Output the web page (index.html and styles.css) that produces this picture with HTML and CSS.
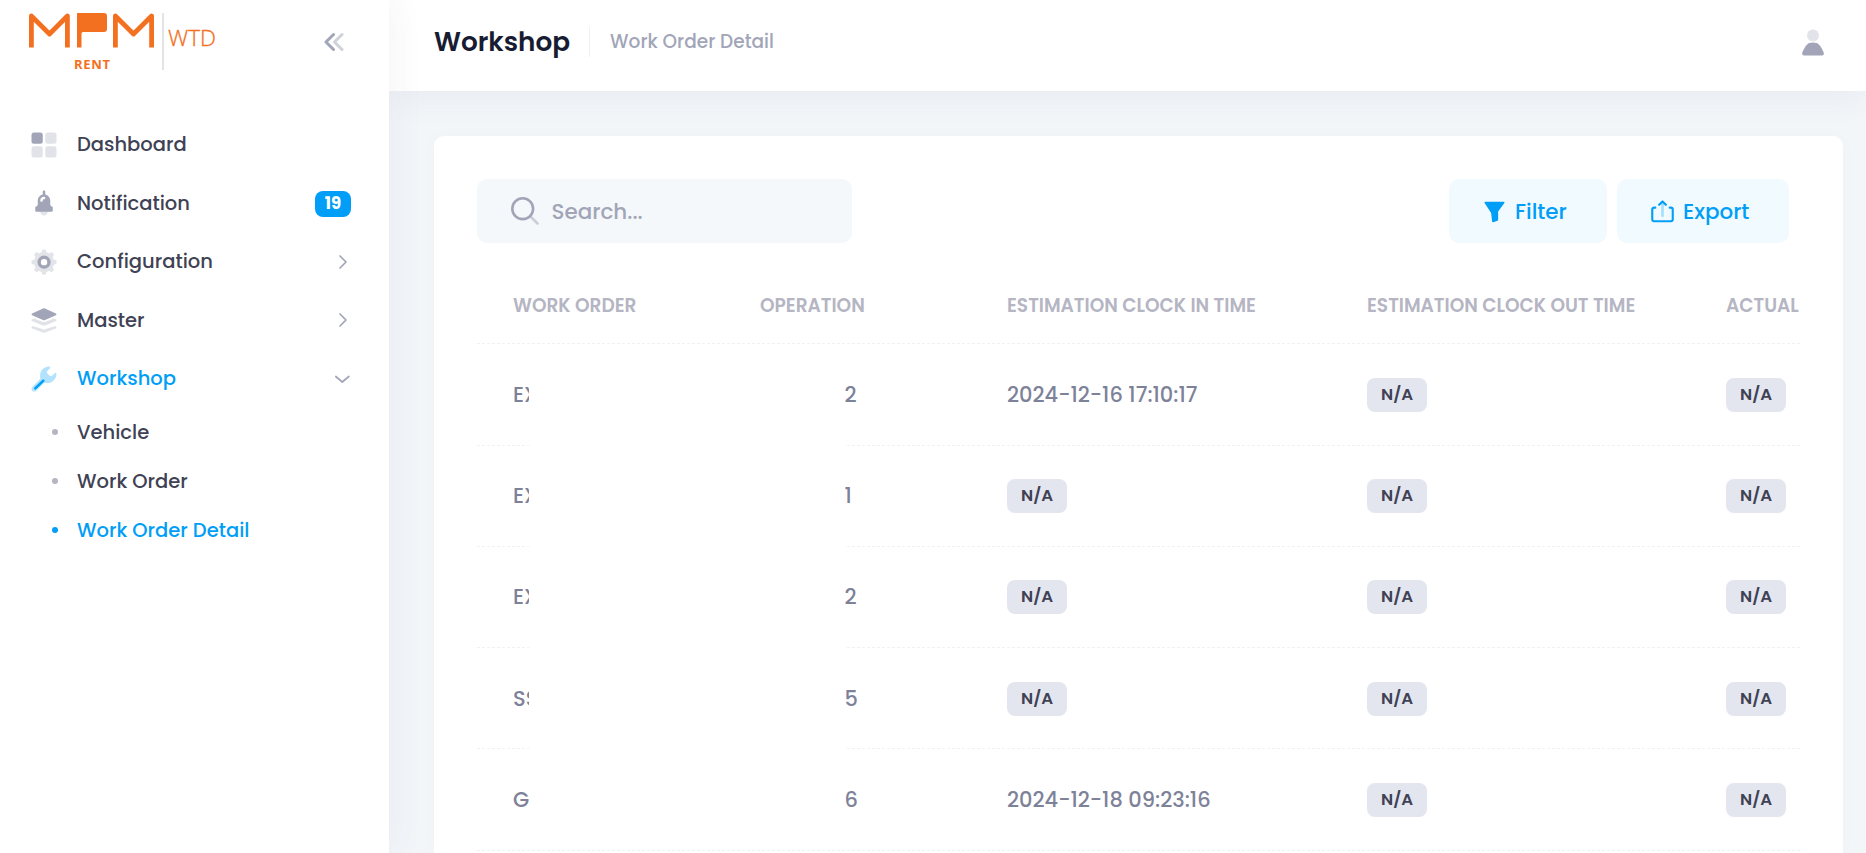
FILE: index.html
```html
<!DOCTYPE html>
<html lang="en">
<head>
<meta charset="utf-8">
<title>Workshop - Work Order Detail</title>
<link rel="stylesheet" href="styles.css">
</head>
<body>
<aside class="sidebar">
  <div class="brand">
    <svg class="logo" width="190" height="60" viewBox="0 0 190 60">
      <g fill="none" stroke="#f37021" stroke-width="4.8" stroke-linejoin="round">
        <path d="M2.400 34.500V3L20.500 21L38.400 3V34.500"/>
        <path d="M86.400 34.500V3L104.500 21L122.600 3V34.500"/>
      </g>
      <path fill="#f37021" d="M48 0h27q3 0 3 3v13q0 3-3 3H54q-1.500 0-1.500 1.500V34.500H48z"/>
      <path fill="#e4e4e6" d="M133 0h2v57h-2z"/>
      <text class="logo-rent" x="45" y="56" textLength="36">RENT</text>
      <text class="logo-wtd" x="139" y="33" textLength="48" lengthAdjust="spacingAndGlyphs">WTD</text>
    </svg>
    <svg class="collapse" width="20" height="20" viewBox="0 0 20 20" fill="none" stroke="#a1a5b7" stroke-width="3" stroke-linecap="round" stroke-linejoin="round"><path d="M9.500 2.500L2 10l7.500 7.500"/><path opacity=".5" d="M18 2.500L10.500 10l7.500 7.500"/></svg>
  </div>
  <nav class="menu">
    <a class="item"><svg class="ico" viewBox="0 0 24 24"><rect x="2" y="2" width="9" height="9" rx="2"/><g opacity=".3"><rect x="13" y="2" width="9" height="9" rx="2"/><rect x="13" y="13" width="9" height="9" rx="2"/><rect x="2" y="13" width="9" height="9" rx="2"/></g></svg><span class="label">Dashboard</span></a>
    <a class="item"><svg class="ico" viewBox="0 0 24 24"><path opacity=".3" d="M12 22C13.657 22 15 20.657 15 19S13.657 16 12 16 9 17.343 9 19s1.343 3 3 3Z"/><path fill-rule="evenodd" d="M19 15V18C19 18.600 18.600 19 18 19H6C5.400 19 5 18.600 5 18V15C6.100 15 7 14.100 7 13V10C7 7.600 8.700 5.600 11 5.100V3C11 2.400 11.400 2 12 2C12.600 2 13 2.400 13 3V5.100C15.300 5.600 17 7.600 17 10V13C17 14.100 17.900 15 19 15ZM11 10C11 9.400 11.400 9 12 9C12.600 9 13 8.600 13 8C13 7.400 12.600 7 12 7C10.300 7 9 8.300 9 10C9 10.600 9.400 11 10 11C10.600 11 11 10.600 11 10Z"/></svg><span class="label">Notification</span><span class="count">19</span></a>
    <a class="item"><svg class="ico" viewBox="0 0 24 24"><path opacity=".3" d="M22.100 11.500V12.600C22.100 13.200 21.700 13.600 21.200 13.700L19.900 13.900C19.700 14.700 19.400 15.500 18.900 16.200L19.700 17.300C20 17.700 20 18.400 19.600 18.800L18.800 19.600C18.400 20 17.800 20 17.300 19.700L16.200 18.900C15.500 19.300 14.700 19.700 13.900 19.900L13.700 21.200C13.600 21.700 13.100 22.100 12.600 22.100H11.500C10.900 22.100 10.500 21.700 10.400 21.200L10.200 19.900C9.400 19.700 8.600 19.400 7.900 18.900L6.800 19.700C6.400 20 5.700 20 5.300 19.600L4.500 18.800C4.100 18.400 4.100 17.800 4.400 17.300L5.200 16.200C4.800 15.500 4.400 14.700 4.200 13.900L2.900 13.700C2.400 13.600 2 13.100 2 12.600V11.500C2 10.900 2.400 10.500 2.900 10.400L4.200 10.200C4.400 9.400 4.700 8.600 5.200 7.900L4.400 6.800C4.100 6.400 4.100 5.700 4.500 5.300L5.300 4.500C5.700 4.100 6.300 4.100 6.800 4.400L7.900 5.200C8.600 4.800 9.400 4.400 10.200 4.200L10.400 2.900C10.500 2.400 11 2 11.500 2H12.600C13.200 2 13.600 2.400 13.700 2.900L13.900 4.200C14.700 4.400 15.500 4.700 16.200 5.200L17.300 4.400C17.700 4.100 18.400 4.100 18.800 4.500L19.600 5.300C20 5.700 20 6.300 19.700 6.800L18.900 7.900C19.300 8.600 19.700 9.400 19.900 10.200L21.200 10.400C21.700 10.500 22.100 11 22.100 11.500ZM12.100 8.600a3.500 3.500 0 1 0 0 7 3.500 3.500 0 1 0 0-7Z"/><circle cx="12.050" cy="12.100" r="3.900" fill="none" stroke="currentColor" stroke-width="2.700"/></svg><span class="label">Configuration</span><svg class="chev" viewBox="0 0 16 16"><path d="M5 2l6 6-6 6"/></svg></a>
    <a class="item"><svg class="ico" viewBox="0 0 24 24"><g opacity=".3"><path d="M11.200 16.400l-8.700-3.500c-.6-.3-.6-1.200 0-1.500L4 10.800l7.200 2.700q.8.300 1.600 0L20 10.800l1.500.6c.6.300.6 1.200 0 1.500l-8.700 3.500q-.8.300-1.600 0Z"/><path d="M11.200 22l-8.700-3.300c-.6-.3-.7-1.200-.2-1.600q.5-.5 1.300-.2l7.600 2.500q.8.300 1.600 0l7.600-2.500q.8-.3 1.300.2c.5.400.4 1.300-.2 1.600L12.800 22q-.8.300-1.600 0Z"/></g><path d="M11.200 12L2.500 8.200c-.6-.3-.6-1.100 0-1.400l8.700-4q.8-.3 1.600 0l8.700 4c.6.300.6 1.100 0 1.400L12.800 12q-.8.300-1.600 0Z"/></svg><span class="label">Master</span><svg class="chev" viewBox="0 0 16 16"><path d="M5 2l6 6-6 6"/></svg></a>
    <a class="item active"><svg class="ico" viewBox="0 0 24 24"><path opacity=".3" d="M20.900 7.100l-2.600 2.300c-.5.500-1.300.4-1.700 0l-2-2c-.5-.5-.5-1.300 0-1.700l2.300-2.600c.4-.5 0-1.100-.7-1.100-4.100 0-7.400 3.300-7.400 7.400 0 .9.100 1.700.4 2.400L2.800 18.100c-1 1-1 2.300-.2 3.200.9.900 2.300.9 3.200 0L12.300 15c.7.200 1.500.3 2.200.3 4.100 0 7.500-3.400 7.500-7.500 0-.7-.6-1.100-1.100-.7Z"/><path d="M4.300 20.200c-.4-.4-.4-1 0-1.400l6.500-6.200c.4-.4 1-.4 1.400 0s.4 1 0 1.400l-6.500 6.200c-.4.400-1 .4-1.400 0Z"/></svg><span class="label">Workshop</span><svg class="chev" viewBox="0 0 16 16"><path d="M.8 5.500L7.300 11l6.500-5.500"/></svg></a>
    <a class="item sub"><i class="dot"></i><span class="label">Vehicle</span></a>
    <a class="item sub"><i class="dot"></i><span class="label">Work Order</span></a>
    <a class="item sub active"><i class="dot"></i><span class="label">Work Order Detail</span></a>
  </nav>
</aside>
<div class="page">
  <header class="topbar">
    <h1 class="title">Workshop</h1>
    <span class="divider"></span>
    <span class="crumb">Work Order Detail</span>
    <svg class="user" viewBox="0 0 24 24" fill="#a1a5b7"><path d="M5 22.800Q2.900 22.800 3.400 20.600C4.600 17.300 6.800 13.600 9 12.700q3-.7 6 0C17.200 13.600 19.400 17.300 20.600 20.600Q21.100 22.800 19 22.800Z"/><circle opacity=".3" cx="12" cy="6.800" r="4.800"/></svg>
  </header>
  <main class="content">
    <section class="card">
      <div class="toolbar">
        <div class="search"><svg class="lens" viewBox="0 0 28 28" fill="none" stroke="#a1a5b7" stroke-width="2.600" stroke-linecap="round"><circle cx="11.700" cy="11.700" r="10.400"/><path opacity=".5" d="M20.500 20.500l6 6"/></svg><span>Search...</span></div>
        <div class="actions">
          <button class="btn filter"><svg class="bi" viewBox="0 0 24 24"><path fill="currentColor" d="M2.200 1.800h19.600c.6 0 .9.700.5 1.200L15.800 12v8.600c0 .5-.3.900-.7 1.100l-4.400 1.500c-.6.200-1.200-.2-1.200-.8L8.500 13.500 1.700 3c-.4-.5-.1-1.200.5-1.200Z"/></svg><span>Filter</span></button>
          <button class="btn export"><svg class="bi" viewBox="0 0 24 24" fill="none" stroke="currentColor" stroke-width="2.200" stroke-linecap="round" stroke-linejoin="round"><path opacity=".3" stroke-width="2.800" d="M12 4.500v12"/><path d="M8.500 5L12 1.500 15.500 5M4.500 8H3.500Q1.300 8 1.300 10v10.200q0 2 2 2h17.400q2 0 2-2V10q0-2-2-2H19.500"/></svg><span>Export</span></button>
        </div>
      </div>
      <div class="table">
        <div class="row head"><span>WORK ORDER</span><span>OPERATION</span><span>ESTIMATION CLOCK IN TIME</span><span>ESTIMATION CLOCK OUT TIME</span><span>ACTUAL</span></div>
        <div class="row"><span class="code">EX</span><span class="op">2</span><span>2024-12-16 17:10:17</span><span><b class="na">N/A</b></span><span><b class="na">N/A</b></span></div>
        <div class="row"><span class="code">EX</span><span class="op">1</span><span><b class="na">N/A</b></span><span><b class="na">N/A</b></span><span><b class="na">N/A</b></span></div>
        <div class="row"><span class="code">EX</span><span class="op">2</span><span><b class="na">N/A</b></span><span><b class="na">N/A</b></span><span><b class="na">N/A</b></span></div>
        <div class="row"><span class="code">SS</span><span class="op">5</span><span><b class="na">N/A</b></span><span><b class="na">N/A</b></span><span><b class="na">N/A</b></span></div>
        <div class="row"><span class="code">G</span><span class="op">6</span><span>2024-12-18 09:23:16</span><span><b class="na">N/A</b></span><span><b class="na">N/A</b></span></div>
        <div class="mask"></div>
      </div>
    </section>
  </main>
</div>
</body>
</html>
```
FILE: styles.css
```css
* { box-sizing: border-box; }
body { margin: 0; height: 853px; overflow: hidden; display: flex; background: #f2f6f9; color: #3f4254; font-family: Poppins, Inter, "Noto Sans", sans-serif; font-weight: 500; }

/* Sidebar */
.sidebar { width: 389px; flex: none; background: #fff; box-shadow: 0 0 35px rgba(82,63,105,.07); position: relative; z-index: 2; }
.brand { height: 91px; padding: 13px 45px 0 29px; display: flex; justify-content: space-between; align-items: flex-start; }
.logo-rent { font: 700 13px "Open Sans", sans-serif; fill: #f37021; }
.logo-wtd { font: 300 21.5px "Open Sans", sans-serif; fill: #f37021; stroke: #f37021; stroke-width: .3px; }
.collapse { margin-top: 19px; }
.menu { padding-top: 24.300px; display: flex; flex-direction: column; }
.item { height: 58.500px; display: flex; align-items: center; padding: 0 38px 0 28.500px; font-size: 19.500px; color: #3f4254; }
.ico { width: 30px; height: 30px; margin-right: 18.500px; fill: currentColor; color: #a1a5b7; }
.label { white-space: nowrap; }
.active, .active .ico { color: #009ef7; }
.count { margin-left: auto; margin-top: 2px; width: 36px; height: 26px; border-radius: 8px; background: #009ef7; color: #fff; font-size: 16.575px; font-weight: 700; line-height: 25px; text-align: center; }
.chev { width: 16px; height: 16px; margin-left: auto; fill: none; stroke: #a1a5b7; stroke-width: 1.700; stroke-linecap: round; stroke-linejoin: round; }
.sub { height: 48.900px; padding-left: 52px; }
.dot { width: 6px; height: 6px; border-radius: 50%; background: #b5b5c3; margin-right: 19px; }
.sub.active .dot { background: #009ef7; }

/* Top bar */
.page { flex: 1; min-width: 0; display: flex; flex-direction: column; }
.topbar { height: 91px; flex: none; background: #fff; box-shadow: 0 10px 30px rgba(82,63,105,.05); display: flex; align-items: center; padding: 0 38px 8px 45px; position: relative; z-index: 1; }
.title { margin: 0; font-size: 26.325px; font-weight: 600; color: #181c32; }
.divider { width: 1px; height: 30px; background: #eff2f5; margin: 0 20px 0 19px; }
.crumb { font-size: 18.525px; line-height: 27px; color: #a1a5b7; }
.user { width: 30px; height: 30px; margin-left: auto; }

/* Card */
.content { padding: 45px 23px 0 45px; flex: 1; min-height: 0; }
.card { height: 100%; background: #fff; border-radius: 10px 10px 0 0; padding: 43px 43px 0; box-shadow: 0 0 20px rgba(76,87,125,.02); }
.toolbar { display: flex; justify-content: space-between; padding-right: 11px; }
.search { width: 375px; height: 64px; border-radius: 10px; background: #f5f8fa; display: flex; align-items: center; padding-left: 34px; font-size: 21.450px; color: #a1a5b7; }
.lens { width: 28px; height: 28px; margin-right: 12.500px; }
.actions { display: flex; gap: 10px; }
.btn { height: 64px; border: 0; border-radius: 10px; background: #f1faff; color: #009ef7; font: inherit; font-size: 21.450px; display: flex; align-items: center; padding: 0 0 0 34px; }
.filter { width: 158px; }
.export { width: 172px; }
.bi { width: 23px; height: 23px; margin-right: 9px; }

/* Table */
.table { position: relative; overflow: hidden; white-space: nowrap; }
.row { display: grid; grid-template-columns: 247px 247px 360px 359px 73px; padding-left: 36px; height: 101.250px; align-items: center; border-bottom: 1px dashed #eff2f5; font-size: 20.9625px; color: #7e8299; }
.head { padding-top: 24px; font-size: 18.525px; font-weight: 600; color: #b5b5c3; }
.code { width: 16px; overflow: hidden; }
.op { padding-left: 84.500px; }
.na { display: block; width: 60px; height: 34px; margin-top: 1px; border-radius: 8px; background: #e4e6ef; color: #3f4254; font-size: 16.575px; font-weight: 600; line-height: 33px; text-align: center; }
.mask { position: absolute; left: 52px; top: 103px; width: 316px; height: 500px; background: #fff; }
```
